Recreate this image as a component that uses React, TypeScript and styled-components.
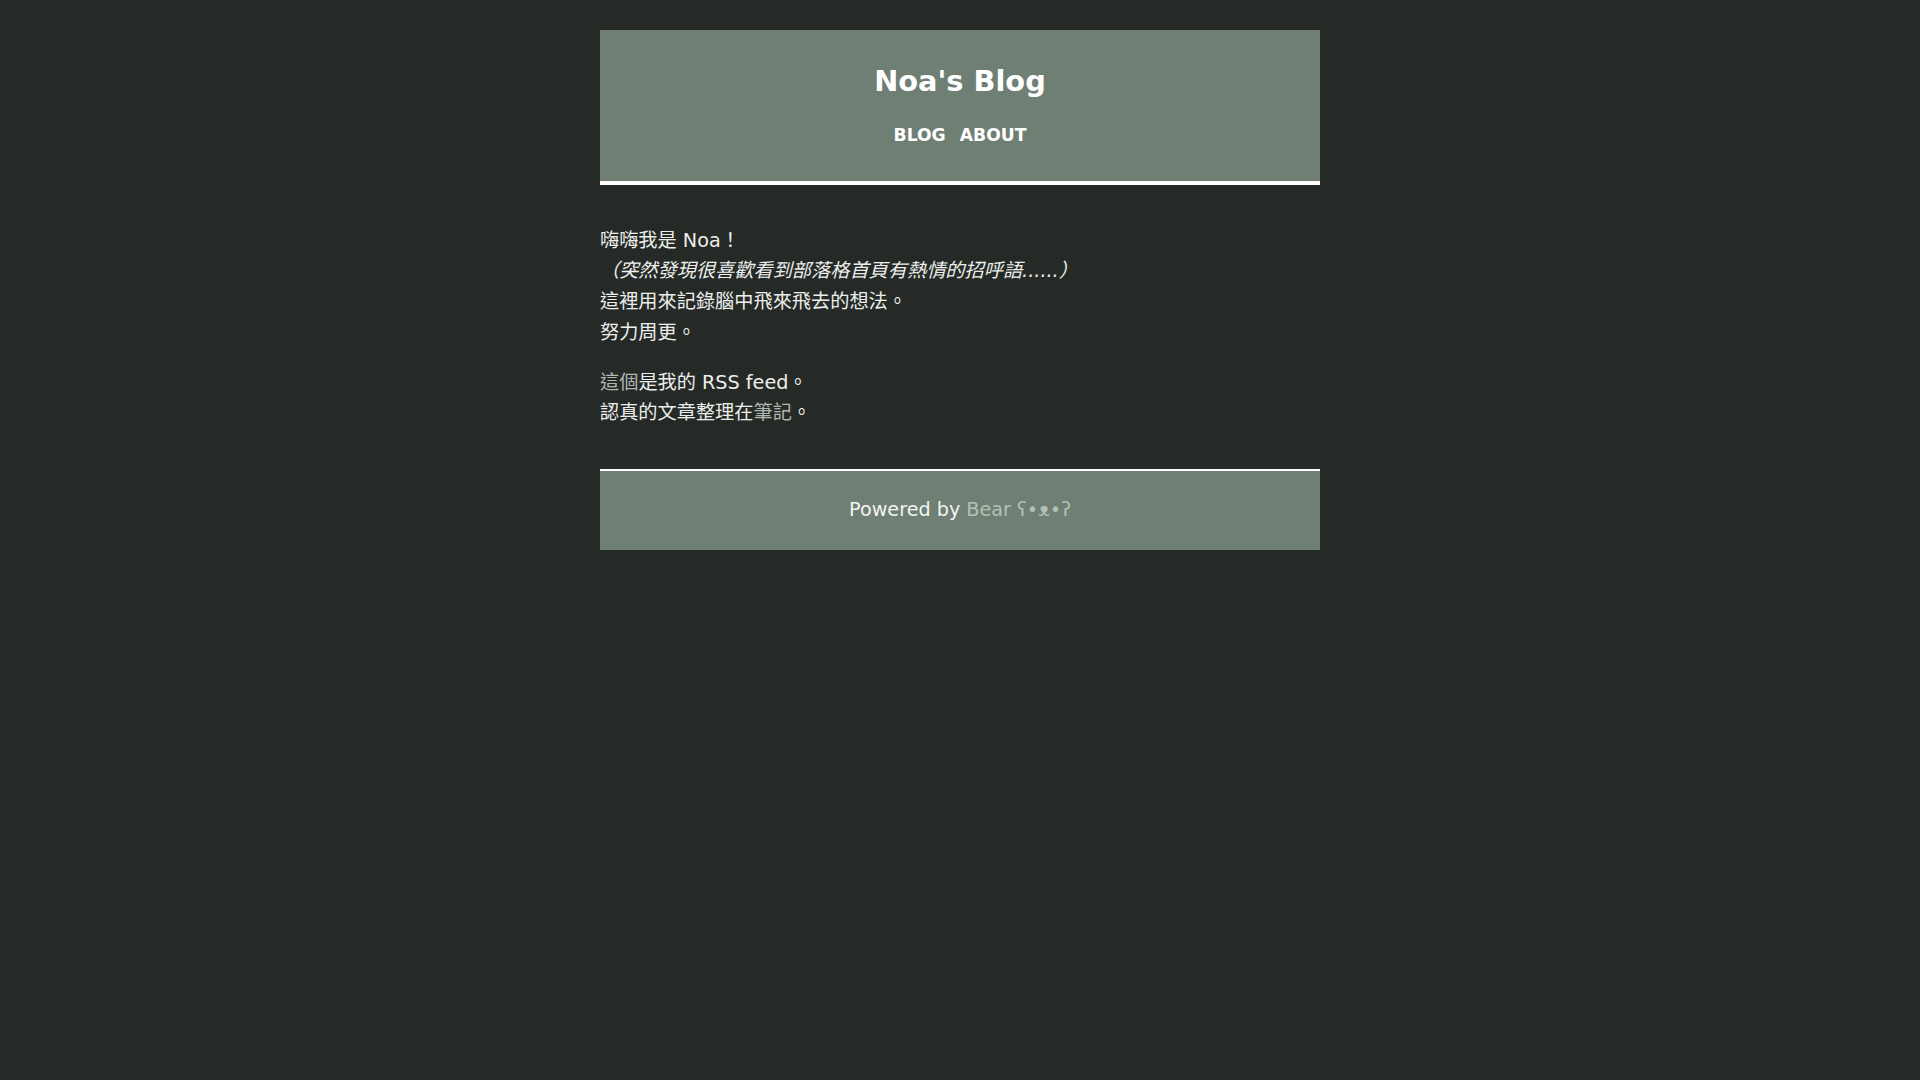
import styled, { createGlobalStyle } from 'styled-components'

const GlobalStyle = createGlobalStyle`
  html, body {
    margin: 0;
    padding: 0;
    background-color: #262a27;
  }
  body {
    font-family: "DejaVu Sans", Verdana, "Noto Sans CJK TC", sans-serif;
    font-size: 19.2px;
    line-height: 1.6;
    color: #eceeec;
  }
`

const Page = styled.div`
  max-width: 720px;
  margin: 0 auto;
  padding-top: 30px;
`

const Header = styled.header`
  display: flex;
  flex-direction: column;
  align-items: center;
  background-color: #6f7f73;
  border-bottom: 4px solid #ffffff;
  padding: 34px 0 33px;
`

const Title = styled.h1`
  margin: 0 0 24px;
  font-size: 28.8px;
  line-height: 1.2;
  font-weight: bold;
  color: #ffffff;
`

const Nav = styled.nav`
  display: flex;
  gap: 14px;
  font-size: 17.2px;
  line-height: 1.5;
`

const NavLink = styled.a`
  color: #ffffff;
  font-weight: bold;
  text-decoration: none;
  text-transform: uppercase;
`

const Main = styled.main`
  padding: 21px 0 21px;
`

const Paragraph = styled.p`
  margin: 1em 0;
`

const Link = styled.a`
  color: #aeb8b0;
  text-decoration: none;
`

const Footer = styled.footer`
  background-color: #6f7f73;
  border-top: 2px solid #ffffff;
  padding: 24px 0;
  text-align: center;
  color: #f2f4f2;
`

const FooterLink = styled.a`
  color: #b2c0b5;
  text-decoration: none;
`

const App = () => {
  return (
    <>
      <GlobalStyle />
      <Page>
        <Header>
          <Title>Noa's Blog</Title>
          <Nav>
            <NavLink href="#">Blog</NavLink>
            <NavLink href="#">About</NavLink>
          </Nav>
        </Header>
        <Main>
          <Paragraph>
            嗨嗨我是 Noa！
            <br />
            <em>（突然發現很喜歡看到部落格首頁有熱情的招呼語......）</em>
            <br />
            這裡用來記錄腦中飛來飛去的想法。
            <br />
            努力周更。
          </Paragraph>
          <Paragraph>
            <Link href="#">這個</Link>是我的 RSS feed。
            <br />
            認真的文章整理在<Link href="#">筆記</Link>。
          </Paragraph>
        </Main>
        <Footer>
          Powered by <FooterLink href="#">Bear ʕ•ᴥ•ʔ</FooterLink>
        </Footer>
      </Page>
    </>
  )
}

export default App
